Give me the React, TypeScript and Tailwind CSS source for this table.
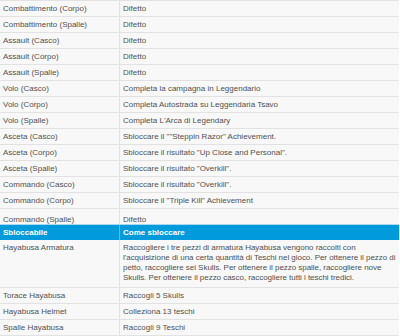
import React from 'react';

const topRows: [string, string][] = [
  ['Combattimento (Corpo)', 'Difetto'],
  ['Combattimento (Spalle)', 'Difetto'],
  ['Assault (Casco)', 'Difetto'],
  ['Assault (Corpo)', 'Difetto'],
  ['Assault (Spalle)', 'Difetto'],
  ['Volo (Casco)', 'Completa la campagna in Leggendario'],
  ['Volo (Corpo)', 'Completa Autostrada su Leggendaria Tsavo'],
  ['Volo (Spalle)', "Completa L'Arca di Legendary"],
  ['Asceta (Casco)', 'Sbloccare il ""Steppin Razor" Achievement.'],
  ['Asceta (Corpo)', 'Sbloccare il risultato "Up Close and Personal".'],
  ['Asceta (Spalle)', 'Sbloccare il risultato "Overkill".'],
  ['Commando (Casco)', 'Sbloccare il risultato "Overkill".'],
  ['Commando (Corpo)', 'Sbloccare il "Triple Kill" Achievement'],
];

const bottomRows: [string, string][] = [
  ['Torace Hayabusa', 'Raccogli 5 Skulls'],
  ['Hayabusa Helmet', 'Colleziona 13 teschi'],
  ['Spalle Hayabusa', 'Raccogli 9 Teschi'],
];

function Row({ name, how }: { name: string; how: string }) {
  return (
    <div className="grid grid-cols-[120px_1fr] h-4 border-b border-[#e2e2e2] bg-[#f8f8f8]">
      <div className="border-r border-[#e2e2e2] px-[3px] leading-[15px] whitespace-nowrap">{name}</div>
      <div className="px-[3px] leading-[15px] whitespace-nowrap">{how}</div>
    </div>
  );
}

export default function App() {
  return (
    <div
      className="w-[400px] h-[336px] overflow-hidden bg-white text-[8px] text-[#505050]"
      style={{ fontFamily: '"Liberation Sans", Arial, sans-serif' }}
    >
      <div className="w-[399px] border-t border-[#e2e2e2]">
        {topRows.map(([n, h]) => (
          <Row key={n} name={n} how={h} />
        ))}
        <div className="grid grid-cols-[120px_1fr] h-[15px] overflow-hidden bg-[#f8f8f8]">
          <div className="border-r border-[#e2e2e2] px-[3px] pt-[3px] leading-[15px]">Commando (Spalle)</div>
          <div className="px-[3px] pt-[3px] leading-[15px]">Difetto</div>
        </div>

        <div className="grid grid-cols-[120px_1fr] h-4 bg-[#019bdb] border-t border-[#a9d7f1] text-white font-bold">
          <div className="border-r border-[#5cbbe8] px-[3px] leading-[15px]">Sbloccabile</div>
          <div className="px-[3px] leading-[15px]">Come sbloccare</div>
        </div>

        <div className="grid grid-cols-[120px_1fr] border-b border-[#e2e2e2] bg-[#f8f8f8]">
          <div className="border-r border-[#e2e2e2] px-[3px] pt-[3px] leading-[10px]">Hayabusa Armatura</div>
          <div className="px-[3px] pt-[3px] pb-[4px] leading-[10px] whitespace-nowrap tracking-[-0.04px]">
            Raccogliere i tre pezzi di armatura Hayabusa vengono raccolti con
            <br />
            l'acquisizione di una certa quantità di Teschi nel gioco. Per ottenere il pezzo di
            <br />
            petto, raccogliere sei Skulls. Per ottenere il pezzo spalle, raccogliere nove
            <br />
            Skulls. Per ottenere il pezzo casco, raccogliere tutti i teschi tredici.
          </div>
        </div>

        {bottomRows.map(([n, h]) => (
          <Row key={n} name={n} how={h} />
        ))}
      </div>
    </div>
  );
}
